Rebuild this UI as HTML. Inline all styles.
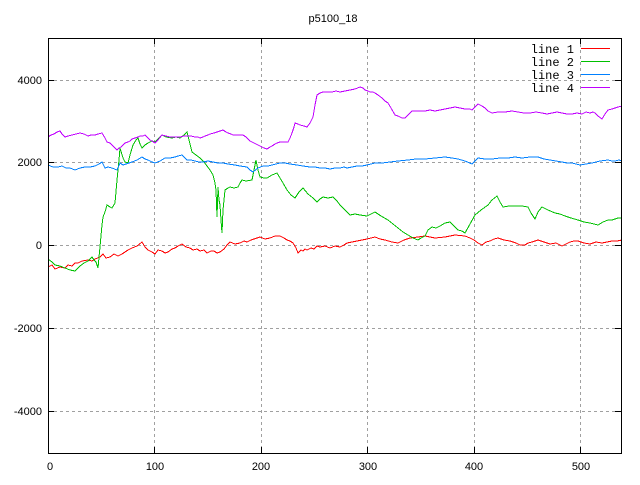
<!DOCTYPE html>
<html><head><style>
html,body{margin:0;padding:0;background:#fff;}
svg text{font-family:"Liberation Sans",sans-serif;font-size:11px;fill:#000;}
svg text.lg{font-family:"Liberation Mono",monospace;font-size:12px;}
</style></head><body>
<svg width="640" height="480" xmlns="http://www.w3.org/2000/svg">
<rect width="640" height="480" fill="#fff"/>
<g stroke="#a0a0a0" stroke-dasharray="3,3" stroke-width="1" shape-rendering="crispEdges">
<line x1="154.5" y1="38" x2="154.5" y2="453"/>
<line x1="261.5" y1="38" x2="261.5" y2="453"/>
<line x1="367.5" y1="38" x2="367.5" y2="453"/>
<line x1="474.5" y1="38" x2="474.5" y2="453"/>
<line x1="580.5" y1="38" x2="580.5" y2="453"/>
<line x1="48" y1="80.5" x2="621" y2="80.5"/>
<line x1="48" y1="162.5" x2="621" y2="162.5"/>
<line x1="48" y1="245.5" x2="621" y2="245.5"/>
<line x1="48" y1="328.5" x2="621" y2="328.5"/>
<line x1="48" y1="411.5" x2="621" y2="411.5"/>
</g>
<g fill="none" stroke-width="1" shape-rendering="crispEdges">
<polyline stroke="#ff0000" points="48,267 52,265 55,269 60,267 65,268 68,265 72,266 75,263 78,263 82,261 88,260 92,261 95,259 100,257 103,254 106,258 110,257 114,254 118,256 122,254 125,252 128,250 132,248 137,246 142,242 145,247 148,250 152,252 155,254 158,250 162,251 165,253 168,252 172,249 175,248 178,246 182,244 186,247 190,248 193,250 197,249 200,251 204,250 207,253 211,251 214,251 217,253 220,252 224,249 227,245 230,242 235,244 240,243 244,241 247,242 251,240 254,239 257,238 260,237 265,239 270,238 275,236 280,236 284,238 287,240 290,241 293,243 296,248 298,253 301,250 303,251 305,249 307,250 311,248 314,249 317,246 320,247 325,246 330,248 335,246 340,247 344,245 347,243 352,242 357,241 362,240 367,239 371,238 375,237 380,239 385,240 392,242 398,243 404,240 410,238 418,237 425,236 435,238 445,237 455,235 465,236 470,238 474,240 478,243 482,245 486,242 490,241 494,239 498,238 504,240 510,241 516,243 520,245 525,245 528,243 532,242 535,241 538,240 544,242 550,244 556,243 562,246 566,244 570,242 574,241 578,241 584,243 590,244 596,242 602,243 607,242 612,241 617,241 622,240"/>
<polyline stroke="#00c000" points="48,259 52,262 55,265 60,266 65,268 70,270 75,271 80,266 84,263 88,261 92,257 94,260 96,262 98,268 100,247 102,225 103,217 105,212 107,205 110,207 112,208 115,203 117,180 119,160 120,148 123,158 125,162 128,163 130,155 133,145 136,140 138,138 140,144 142,148 145,145 148,143 152,141 155,142 158,139 162,135 166,137 172,138 176,137 180,138 184,135 187,132 189,140 192,152 196,155 200,158 204,162 207,166 210,170 213,175 215,183 216,190 217,217 218,187 219,200 220,205 221,220 222,233 223,210 225,190 228,188 230,187 234,188 238,187 240,183 242,180 246,181 252,180 254,170 256,160 258,170 260,177 264,178 267,178 272,175 277,173 280,178 283,183 287,190 291,195 295,198 299,192 303,188 308,194 313,198 317,202 320,199 323,197 328,198 333,197 337,201 340,205 345,210 350,215 355,214 360,215 367,216 371,214 375,212 381,216 388,220 393,224 398,228 403,232 408,235 413,238 418,240 421,238 425,236 428,230 432,227 436,228 440,226 445,223 450,222 454,226 458,230 462,231 465,233 470,224 475,215 481,210 488,205 492,200 497,196 500,202 503,207 509,206 515,206 522,206 528,207 531,213 535,219 538,212 542,207 548,210 555,213 560,214 565,216 571,218 578,220 584,222 590,223 594,224 598,225 603,222 608,220 612,220 615,219 618,218 622,218"/>
<polyline stroke="#0080ff" points="48,165 53,167 58,167 62,166 66,168 70,168 75,170 80,168 85,167 90,167 95,166 99,164 102,162 105,168 108,167 112,168 117,170 120,163 123,165 126,164 129,163 132,162 137,160 142,157 145,159 148,160 152,162 155,163 160,161 165,158 170,158 175,157 178,156 182,155 187,160 191,160 195,161 199,162 203,162 208,161 213,162 218,163 223,163 228,164 235,165 240,166 247,167 250,170 253,172 258,168 263,166 268,166 272,165 276,164 280,163 285,163 290,164 297,165 303,166 310,167 315,167 320,168 325,168 330,169 335,168 340,168 344,167 347,168 352,167 357,166 362,166 367,165 371,164 375,163 382,163 390,162 398,161 408,160 416,159 425,159 435,158 445,157 452,158 458,159 465,161 472,164 475,161 478,158 485,159 492,159 500,158 508,158 515,157 522,158 530,157 538,157 544,159 550,160 556,161 562,162 567,163 572,163 576,164 580,165 586,164 592,163 600,161 608,160 612,161 615,161 619,160 622,161"/>
<polyline stroke="#c000ff" points="48,137 51,135 54,134 57,132 60,131 62,134 65,137 68,136 72,135 76,134 80,133 84,134 88,136 91,135 95,135 98,134 102,133 105,138 107,142 110,143 112,145 115,148 117,150 119,148 121,147 123,145 125,143 128,142 130,141 132,139 135,138 138,137 140,136 143,136 145,135 148,138 150,140 152,141 155,143 158,140 162,135 166,136 170,137 175,137 180,137 184,136 187,136 191,136 195,137 198,137 200,138 203,137 205,136 208,135 210,134 214,133 217,132 220,131 223,130 226,132 228,133 231,134 233,135 238,135 243,135 246,137 248,139 250,141 252,142 256,144 260,146 264,148 267,149 270,147 272,146 275,144 277,143 280,142 283,142 286,142 288,142 290,138 292,133 294,127 295,123 298,124 300,125 304,126 307,127 310,123 313,117 315,105 317,95 320,93 323,92 327,92 332,92 336,91 340,92 345,91 350,90 355,89 360,87 363,88 365,90 368,91 370,92 373,92 375,93 378,95 382,98 385,101 388,103 391,108 395,115 398,116 400,117 402,118 405,118 408,115 412,111 418,111 425,111 430,110 435,111 440,110 445,109 450,108 455,107 460,108 465,109 470,109 472,110 475,107 478,104 482,106 485,108 488,111 492,113 498,112 505,112 512,111 518,112 524,113 530,113 536,112 542,113 547,114 552,113 557,112 562,113 567,114 572,114 577,113 582,114 586,112 590,113 593,112 595,113 598,116 602,119 605,114 608,110 612,109 615,108 618,107 622,106"/>
</g>
<rect x="48.5" y="38.5" width="573" height="415" fill="none" stroke="#000" shape-rendering="crispEdges"/>
<g stroke="#000" shape-rendering="crispEdges">
<line x1="154.5" y1="38" x2="154.5" y2="44"/><line x1="154.5" y1="447" x2="154.5" y2="453"/>
<line x1="261.5" y1="38" x2="261.5" y2="44"/><line x1="261.5" y1="447" x2="261.5" y2="453"/>
<line x1="367.5" y1="38" x2="367.5" y2="44"/><line x1="367.5" y1="447" x2="367.5" y2="453"/>
<line x1="474.5" y1="38" x2="474.5" y2="44"/><line x1="474.5" y1="447" x2="474.5" y2="453"/>
<line x1="580.5" y1="38" x2="580.5" y2="44"/><line x1="580.5" y1="447" x2="580.5" y2="453"/>
<line x1="48" y1="80.5" x2="54" y2="80.5"/><line x1="615" y1="80.5" x2="621" y2="80.5"/>
<line x1="48" y1="162.5" x2="54" y2="162.5"/><line x1="615" y1="162.5" x2="621" y2="162.5"/>
<line x1="48" y1="245.5" x2="54" y2="245.5"/><line x1="615" y1="245.5" x2="621" y2="245.5"/>
<line x1="48" y1="328.5" x2="54" y2="328.5"/><line x1="615" y1="328.5" x2="621" y2="328.5"/>
<line x1="48" y1="411.5" x2="54" y2="411.5"/><line x1="615" y1="411.5" x2="621" y2="411.5"/>
</g>
<text x="333" y="22" text-anchor="middle">p5100_18</text>
<g text-anchor="end">
<text x="42" y="84">4000</text>
<text x="42" y="166">2000</text>
<text x="42" y="249">0</text>
<text x="42" y="332">-2000</text>
<text x="42" y="415">-4000</text>
</g>
<g text-anchor="middle">
<text x="50" y="470">0</text>
<text x="155" y="470">100</text>
<text x="261" y="470">200</text>
<text x="368" y="470">300</text>
<text x="474" y="470">400</text>
<text x="581" y="470">500</text>
</g>
<g text-anchor="end">
<text class="lg" x="574" y="53">line 1</text>
<text class="lg" x="574" y="66">line 2</text>
<text class="lg" x="574" y="79">line 3</text>
<text class="lg" x="574" y="92">line 4</text>
</g>
<g stroke-width="1" shape-rendering="crispEdges">
<line x1="581" y1="48.5" x2="610" y2="48.5" stroke="#ff0000"/>
<line x1="581" y1="61.5" x2="610" y2="61.5" stroke="#00c000"/>
<line x1="581" y1="74.5" x2="610" y2="74.5" stroke="#0080ff"/>
<line x1="581" y1="87.5" x2="610" y2="87.5" stroke="#c000ff"/>
</g>
</svg>
</body></html>
